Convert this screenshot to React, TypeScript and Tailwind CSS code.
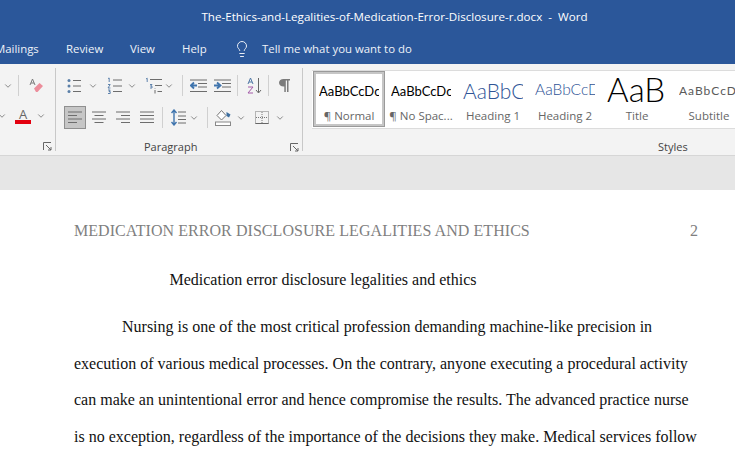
import React from "react";
import { ChevronDown, Lightbulb } from "lucide-react";

const ui = "font-['Open_Sans','Noto_Sans',sans-serif]";
const preview = "font-['Lato','Liberation_Sans',sans-serif]";

function Chevron() {
  return <ChevronDown size={10} strokeWidth={1.6} className="text-[#555]" />;
}

function Divider() {
  return <div className="w-px h-[21px] bg-[#d0d0d0]" />;
}

function Launcher() {
  return (
    <svg width="9" height="9" viewBox="0 0 9 9" fill="none" stroke="#666" strokeWidth="1">
      <path d="M0.5 8V0.5H8" />
      <path d="M3 3L8 8M8 5V8H5" />
    </svg>
  );
}

function Lines({ align }: { align: "left" | "center" | "right" | "full" }) {
  const rows = {
    left: ["M1 2H15", "M1 5.5H10", "M1 9H15", "M1 12.5H10"],
    center: ["M1 2H15", "M3.5 5.5H12.5", "M1 9H15", "M3.5 12.5H12.5"],
    right: ["M1 2H15", "M6 5.5H15", "M1 9H15", "M6 12.5H15"],
    full: ["M1 2H15", "M1 5.5H15", "M1 9H15", "M1 12.5H15"],
  }[align];
  return (
    <svg width="16" height="15" viewBox="0 0 16 15" fill="none" stroke="#6d6d6d" strokeWidth="1">
      {rows.map((d) => (
        <path key={d} d={d} />
      ))}
    </svg>
  );
}

function Bullets() {
  return (
    <svg width="15" height="16" viewBox="0 0 15 16" fill="none">
      <g fill="#5a7fa8">
        <circle cx="2" cy="2.5" r="1.5" />
        <circle cx="2" cy="8" r="1.5" />
        <circle cx="2" cy="13.5" r="1.5" />
      </g>
      <path d="M6 2.5H14M6 8H14M6 13.5H14" stroke="#6d6d6d" />
    </svg>
  );
}

function Numbering() {
  return (
    <svg width="15" height="17" viewBox="0 0 15 17" fill="none">
      <path d="M1 1.5L2.2 1V5M1 7.5H3.2L1 11H3.4M1 13H3.2L2 14.5H3.2V16.5H1" stroke="#4f77a5" strokeWidth="0.9" />
      <path d="M6 3H15M6 9H15M6 14.5H15" stroke="#6d6d6d" />
    </svg>
  );
}

function Multilevel() {
  return (
    <svg width="17" height="17" viewBox="0 0 17 17" fill="none">
      <path d="M1 2L2.2 1.2V5" stroke="#4f77a5" strokeWidth="0.9" />
      <path d="M5 7.5H7L5.5 9.2H7V11H5" stroke="#4f77a5" strokeWidth="0.9" />
      <path d="M10 13V16.5M10 11.5V12" stroke="#6d6d6d" />
      <path d="M5 2.5H17M10 8.5H17M12.5 14.5H17" stroke="#6d6d6d" />
    </svg>
  );
}

function Indent({ flip }: { flip?: boolean }) {
  return (
    <svg width="17" height="14" viewBox="0 0 17 14" fill="none">
      <path d="M0 1H17M8 4.5H17M8 8H17M0 12.5H17" stroke="#6d6d6d" />
      {flip ? (
        <path d="M0 6.5H5M3 3.5L6.5 6.5L3 9.5" stroke="#3f74ad" strokeWidth="1.8" />
      ) : (
        <path d="M7 6.5H2M4 3.5L0.8 6.5L4 9.5" stroke="#3f74ad" strokeWidth="1.8" />
      )}
    </svg>
  );
}

function Sort() {
  return (
    <svg width="15" height="17" viewBox="0 0 15 17" fill="none">
      <path d="M1 7L3.5 1L6 7M2 5H5" stroke="#4f77a5" />
      <path d="M1 10H6L1 16H6" stroke="#a35aa8" />
      <path d="M11.5 1V15.5M9 13L11.5 16L14 13" stroke="#666" />
    </svg>
  );
}

function Pilcrow() {
  return (
    <svg width="11" height="13" viewBox="0 0 11 13">
      <path d="M4.5 0H11V1.5H9.5V13H8V1.5H6.8V13H5.3V7.5H4.5C2 7.5 0 6 0 3.8C0 1.6 2 0 4.5 0Z" fill="#7b7b7b" />
    </svg>
  );
}

function LineSpacing() {
  return (
    <svg width="15" height="17" viewBox="0 0 15 17" fill="none">
      <path d="M3 1V16M0.5 4L3 1L5.5 4M0.5 13L3 16L5.5 13" stroke="#3f74ad" strokeWidth="1.4" />
      <path d="M7 3H15M7 7H15M7 10.5H15M7 14H15" stroke="#6d6d6d" />
    </svg>
  );
}

function Shading() {
  return (
    <svg width="17" height="17" viewBox="0 0 17 17" fill="none">
      <path d="M2 6.5L6.5 1.5L11 6.5L6.5 11Z" stroke="#777" fill="#fff" />
      <path d="M11.5 3L15.5 5.5L14 8.5L11.5 7Z" fill="#3f6f9f" />
      <rect x="0.5" y="13" width="15" height="3.5" stroke="#888" fill="#fff" />
    </svg>
  );
}

function Borders() {
  return (
    <svg width="14" height="13" viewBox="0 0 14 13" fill="none">
      <rect x="0.5" y="0.5" width="13" height="12" stroke="#777" strokeDasharray="1 1" />
      <path d="M7 1V12M1 6.5H13" stroke="#777" strokeDasharray="1 1" />
      <path d="M0.5 12.5H13.5" stroke="#666" />
    </svg>
  );
}

function Eraser() {
  return (
    <svg width="15" height="15" viewBox="0 0 15 15" fill="none">
      <path d="M1 7L3.5 1L6 7M2 5H5" stroke="#7b7b7b" />
      <path d="M5 10.5L10.5 5L14 8L8.5 14H7Z" fill="#ec8d9b" />
    </svg>
  );
}

function FontColor() {
  return (
    <div className="flex flex-col items-center w-4">
      <span className={`${ui} text-[13px] leading-[11px] text-[#666]`}>A</span>
      <div className="w-4 h-[4px] bg-[#e3000f]" />
    </div>
  );
}

function StyleCell({
  sample,
  label,
  className,
  selected,
}: {
  sample: string;
  label: string;
  className: string;
  selected?: boolean;
}) {
  return (
    <div
      className={`w-[72px] h-[56px] shrink-0 flex flex-col items-center overflow-hidden border-[3px] ${
        selected ? "border-[#c6c6c6] outline outline-[#9a9a9a] -outline-offset-[1px] bg-white" : "border-transparent"
      }`}
    >
      <div className="h-[31px] w-[60px] flex items-center overflow-hidden">
        <span className={`whitespace-nowrap ${preview} ${className}`}>{sample}</span>
      </div>
      <span className={`${ui} text-[11.5px] leading-[16px] text-[#666] whitespace-nowrap mt-[3px]`}>{label}</span>
    </div>
  );
}

export default function App() {
  return (
    <div className="w-[735px] h-[459px] overflow-hidden bg-white">
      {/* title bar */}
      <div className={`${ui} h-8 bg-[#2b579a] text-white text-[11.6px] flex items-center justify-center pl-[54px] pt-[1px]`}>
        The-Ethics-and-Legalities-of-Medication-Error-Disclosure-r.docx&nbsp; -&nbsp; Word
      </div>

      {/* tabs */}
      <div className={`${ui} h-8 bg-[#2b579a] text-[#eef2f8] text-[11.4px] flex items-center pt-[1px] -ml-[5px]`}>
        <span className="w-[71px]">Mailings</span>
        <span className="w-[64px]">Review</span>
        <span className="w-[52px]">View</span>
        <span className="w-[51px]">Help</span>
        <Lightbulb size={18} strokeWidth={1.3} className="mr-[11px]" />
        <span>Tell me what you want to do</span>
      </div>

      {/* ribbon */}
      <div className="h-[92px] bg-[#f3f3f3] border-b border-[#d6d6d6] flex">
        <div className="w-[56px] shrink-0 border-r border-[#c8c8c8] my-[4px] flex flex-col">
          <div className="flex items-center h-[21px] mt-[7px] pl-[3px] gap-[7px]">
            <Chevron />
            <div className="-ml-[2px]"><Divider /></div>
            <div className="ml-[3px]">
              <Eraser />
            </div>
          </div>
          <div className="flex items-center h-[21px] mt-[10px] -ml-[3px]">
            <Chevron />
            <div className="ml-[8px]">
              <FontColor />
            </div>
            <div className="ml-[5px]">
              <Chevron />
            </div>
          </div>
          <div className="flex justify-end pr-[3px] mt-[16px]">
            <Launcher />
          </div>
        </div>

        <div className="w-[247px] shrink-0 border-r border-[#c8c8c8] my-[4px] flex flex-col">
          <div className="flex items-center h-[21px] mt-[7px] pl-[11px]">
            <Bullets />
            <div className="ml-[6px]"><Chevron /></div>
            <div className="ml-[9px]"><Numbering /></div>
            <div className="ml-[5px]"><Chevron /></div>
            <div className="ml-[8px]"><Multilevel /></div>
            <div className="ml-[2px]"><Chevron /></div>
            <div className="ml-[8px]"><Divider /></div>
            <div className="ml-[7px]"><Indent /></div>
            <div className="ml-[7px]"><Indent flip /></div>
            <div className="ml-[6px]"><Divider /></div>
            <div className="ml-[9px]"><Sort /></div>
            <div className="ml-[6px]"><Divider /></div>
            <div className="ml-[10px]"><Pilcrow /></div>
          </div>
          <div className="flex items-center h-[23px] mt-[10px] pl-[8px]">
            <div className="w-[22px] h-[23px] bg-[#c6c6c6] border border-[#8f8f8f] flex items-center justify-center">
              <Lines align="left" />
            </div>
            <div className="ml-[5px]"><Lines align="center" /></div>
            <div className="ml-[8px]"><Lines align="right" /></div>
            <div className="ml-[8px]"><Lines align="full" /></div>
            <div className="ml-[7px]"><Divider /></div>
            <div className="ml-[8px]"><LineSpacing /></div>
            <div className="ml-[3px]"><Chevron /></div>
            <div className="ml-[8px]"><Divider /></div>
            <div className="ml-[7px]"><Shading /></div>
            <div className="ml-[4px]"><Chevron /></div>
            <div className="ml-[9px]"><Borders /></div>
            <div className="ml-[6px]"><Chevron /></div>
          </div>
          <div className="flex items-center mt-[10px] h-[18px] pr-[3px]">
            <span className={`${ui} text-[11px] text-[#444] ml-[88px]`}>Paragraph</span>
            <div className="ml-auto">
              <Launcher />
            </div>
          </div>
        </div>

        <div className="flex-1 flex flex-col min-w-0">
          <div className="ml-[9px] mt-[6px] h-[60px] border-y border-[#dcdcdc] bg-white flex items-center pl-[1px] overflow-hidden">
            <StyleCell selected sample="AaBbCcDc" label="¶ Normal" className="text-[13px] pt-[3px] text-black" />
            <StyleCell sample="AaBbCcDc" label="¶ No Spac..." className="text-[13px] pt-[3px] text-black" />
            <StyleCell sample="AaBbCc" label="Heading 1" className="text-[21px] font-light pt-[2px] text-[#2f5496]" />
            <StyleCell sample="AaBbCcD" label="Heading 2" className="text-[15.5px] font-light text-[#2f5496]" />
            <StyleCell sample="AaB" label="Title" className="text-[33px] leading-[31px] font-light text-black" />
            <StyleCell sample="AaBbCcD" label="Subtitle" className="text-[12px] tracking-[1px] pt-[3px] text-[#5a5a5a]" />
          </div>
          <div className={`${ui} text-[11px] text-[#444] mt-[10px] ml-[355px]`}>Styles</div>
        </div>
      </div>

      {/* gray band above the page */}
      <div className="h-[34px] bg-[#e6e6e6]" />

      {/* document */}
      <div className="font-['Liberation_Serif',serif] text-[16px] pl-[74px] pr-[37px] text-[#111]">
        <div className="flex justify-between items-center mt-[31px] text-[#7f7f7f] leading-[20px]">
          <span className="tracking-[0.06px]">MEDICATION ERROR DISCLOSURE LEGALITIES AND ETHICS</span>
          <span>2</span>
        </div>
        <p className="mt-[29px] text-center w-[500px] leading-[20px] -ml-[1px]">Medication error disclosure legalities and ethics</p>
        <div className="mt-[19px] leading-[36.7px] w-[640px]">
          <p className="indent-[48px] whitespace-nowrap">Nursing is one of the most critical profession demanding machine-like precision in</p>
          <p className="whitespace-nowrap">execution of various medical processes. On the contrary, anyone executing a procedural activity</p>
          <p className="whitespace-nowrap">can make an unintentional error and hence compromise the results. The advanced practice nurse</p>
          <p className="whitespace-nowrap">is no exception, regardless of the importance of the decisions they make. Medical services follow</p>
        </div>
      </div>
    </div>
  );
}
